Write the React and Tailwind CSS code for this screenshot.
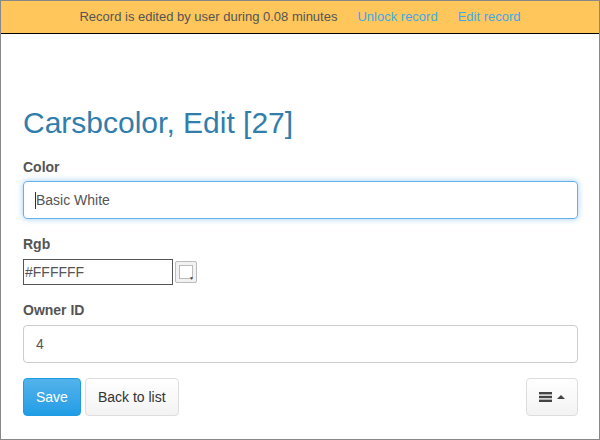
export default function App() {
    return (
        <div className="w-[600px] h-[440px] border border-[#888888] bg-white font-['Liberation_Sans',Arial,sans-serif] text-[#555555] flex flex-col overflow-hidden">
            <div className="h-[33px] shrink-0 bg-[#fec65b] border-b border-black flex items-center justify-center gap-5 text-[13px]">
                <span>Record is edited by user during 0.08 minutes</span>
                <a className="text-[#3fa9e8]">Unlock record</a>
                <a className="text-[#3fa9e8]">Edit record</a>
            </div>

            <div className="pl-[22px] pr-[21px] pt-[72px]">
                <h1 className="text-[30px] leading-[33px] text-[#317eac]">Carsbcolor, Edit [27]</h1>

                <div className="mt-[18px]">
                    <label className="block text-[14px] font-bold leading-5">Color</label>
                    <div className="mt-[4px] h-[38px] rounded border border-[#66afe9] shadow-[0_0_6px_rgba(102,175,233,0.6)] flex items-center pl-[11px] pr-3 text-[14px]">
                        <span className="w-px h-[17px] bg-[#333]" />
                        <span>Basic White</span>
                    </div>
                </div>

                <div className="mt-[15px]">
                    <label className="block text-[14px] font-bold leading-5">Rgb</label>
                    <div className="mt-[5px] flex items-center gap-[2px]">
                        <div className="w-[150px] h-[26px] border border-[#555] flex items-center px-[1px] text-[14px]">#FFFFFF</div>
                        <div className="w-[22px] h-[22px] border border-[#bbb] bg-[#f2f2f2] rounded-[2px] p-[3px] relative">
                            <div className="w-full h-full bg-white border border-[#bbb]" />
                            <span className="absolute right-[2px] bottom-[1px] text-[5px] leading-none text-[#444]">▼</span>
                        </div>
                    </div>
                </div>

                <div className="mt-[15px]">
                    <label className="block text-[14px] font-bold leading-5">Owner ID</label>
                    <div className="mt-[5px] h-[38px] rounded border border-[#cccccc] flex items-center px-3 text-[14px]">4</div>
                </div>

                <div className="mt-[15px] flex items-center">
                    <button className="h-[38px] px-[12px] rounded border border-[#1d9ce5] bg-gradient-to-b from-[#52b3eb] to-[#1f9de5] text-white text-[14px]">Save</button>
                    <button className="ml-[4px] h-[38px] px-[12px] rounded border border-[#dddddd] bg-gradient-to-b from-white to-[#f3f3f3] text-[#333] text-[14px]">Back to list</button>
                    <button className="ml-auto h-[38px] w-[52px] rounded border border-[#dddddd] bg-gradient-to-b from-white to-[#f3f3f3] flex items-center justify-center gap-[5px]">
                        <svg width="13" height="12" viewBox="0 0 13 12">
                            <rect x="0" y="1" width="13" height="2.4" fill="#444" />
                            <rect x="0" y="4.8" width="13" height="2.4" fill="#444" />
                            <rect x="0" y="8.6" width="13" height="2.4" fill="#444" />
                        </svg>
                        <svg width="8" height="4" viewBox="0 0 8 4">
                            <path d="M0 4 L4 0 L8 4 Z" fill="#444" />
                        </svg>
                    </button>
                </div>
            </div>
        </div>
    )
}
